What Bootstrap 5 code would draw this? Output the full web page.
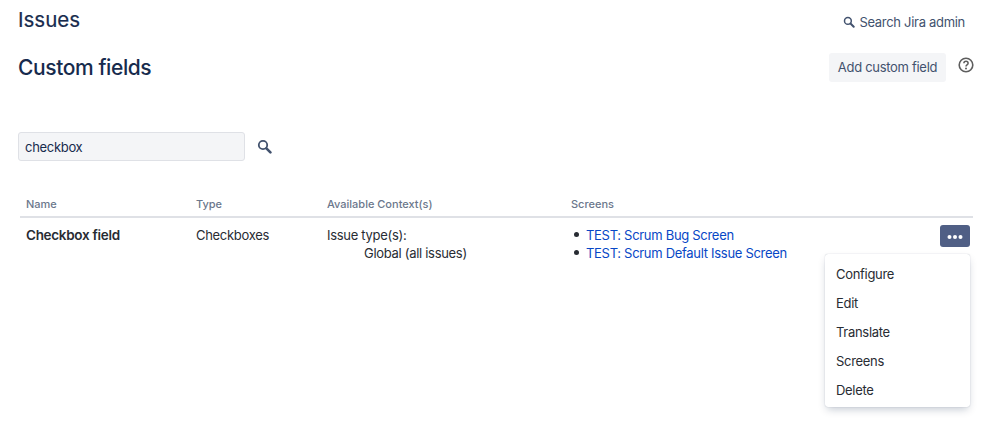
<!doctype html>
<html lang="en">
<head>
<meta charset="utf-8">
<title>Custom fields</title>
<link href="https://cdn.jsdelivr.net/npm/bootstrap@5.3.0/dist/css/bootstrap.min.css" rel="stylesheet">
<style>
html,body{height:100%;overflow:hidden}
body{font-family:Inter,"Liberation Sans",sans-serif;font-size:13px;letter-spacing:-.3px;line-height:19px;color:#172b4d;background:#fff;padding:0 25px 0 18px}
.top-bar{height:40px}
.sec-title{font-size:20.5px;font-weight:400;line-height:24px;margin:0;color:#172b4d;letter-spacing:0;-webkit-text-stroke:.2px #172b4d}
.admin-search{color:#42526e;margin-right:9px;margin-top:4px}
.head-bar{height:79px;margin-top:13px}
.page-title{font-size:21px;font-weight:500;letter-spacing:-.4px;line-height:29px;margin:0;color:#172b4d}
.add-btn{background:#f4f5f7;color:#42526e;border:0;border-radius:3px;height:29px;width:117px;padding:0;font-size:13px;letter-spacing:-.3px;margin-right:12px}
.help-ico{margin-top:4px}
.filter-input{width:227px;height:29px;background:#f4f5f7;border:1px solid #dfe1e6;border-radius:3px;color:#172b4d;font-size:13px;letter-spacing:-.3px;padding:0 6px}
.filter-row{gap:12px}
.field-table{margin:33px 0 0 2px;width:953px;table-layout:fixed;border-collapse:collapse}
.field-table th{font-size:11px;font-weight:500;letter-spacing:0;color:#6b778c;padding:0 6px 2px;line-height:20px;border-bottom:2px solid #dfe1e6}
.field-table td{padding:8px 6px 0;vertical-align:top;line-height:18px;color:#282c33}
.field-table td.name-cell{font-weight:600;font-size:13.5px}
.ctx-list{padding-left:37px}
.scr-list{margin:0;padding-left:15px;list-style:none}
.scr-list li{position:relative}
.scr-list li::before{content:"";position:absolute;left:-12px;top:6px;width:5px;height:5px;border-radius:50%;background:#282c33}
.scr-list a{color:#0747c6;text-decoration:none}
.more-wrap{position:relative;height:40px}
.more-btn{position:absolute;top:-1px;right:-3px;width:30px;height:22px;background:#505f85;border:0;border-radius:3px;padding:0}
.more-menu{position:absolute;top:28px;right:-3px;width:145px;background:#fff;border-radius:3px;box-shadow:0 4px 8px -2px rgba(9,30,66,.25),0 0 1px rgba(9,30,66,.31);padding:5px 0 3px;z-index:5}
.more-menu a{display:block;height:29px;line-height:30px;padding:0 11px;color:#282c33;text-decoration:none;font-size:13px}
</style>
</head>
<body>
<div class="top-bar d-flex justify-content-between align-items-center">
  <h2 class="sec-title">Issues</h2>
  <div class="admin-search d-flex align-items-center gap-1">
    <svg width="12" height="12" viewBox="0 0 12 12" fill="none" stroke="#42526e"><circle cx="4.9" cy="4.9" r="3.4" stroke-width="1.5"/><path d="M7.5 7.5l3.2 3.2" stroke-width="2" stroke-linecap="round"/></svg>
    <span>Search Jira admin</span>
  </div>
</div>
<div class="head-bar d-flex justify-content-between align-items-start">
  <h1 class="page-title">Custom fields</h1>
  <div class="d-flex align-items-start">
    <button class="add-btn" type="button">Add custom field</button>
    <svg class="help-ico" width="16" height="16" viewBox="0 0 16 16" fill="none"><circle cx="8" cy="8" r="6.8" stroke="#5e5e5e" stroke-width="1.6"/><path d="M5.9 6.3c0-1.2 1-2 2.1-2s2.1.8 2.1 1.9c0 1.7-2.1 1.6-2.1 3.2" stroke="#5e5e5e" stroke-width="1.5"/><circle cx="8" cy="11.4" r="1" fill="#5e5e5e"/></svg>
  </div>
</div>
<div class="filter-row d-flex align-items-center">
  <input class="filter-input" type="text" value="checkbox" aria-label="Filter">
  <svg width="15" height="15" viewBox="0 0 15 15" fill="none" stroke="#42526e"><circle cx="6" cy="6" r="4.2" stroke-width="1.8"/><path d="M9.4 9.4l4 4" stroke-width="2.6" stroke-linecap="round"/></svg>
</div>
<table class="field-table">
  <colgroup><col style="width:170px"><col style="width:131px"><col style="width:244px"><col style="width:330px"><col></colgroup>
  <thead><tr><th>Name</th><th>Type</th><th>Available Context(s)</th><th>Screens</th><th></th></tr></thead>
  <tbody><tr>
    <td class="name-cell">Checkbox field</td>
    <td>Checkboxes</td>
    <td>Issue type(s):<div class="ctx-list">Global (all issues)</div></td>
    <td><ul class="scr-list"><li><a href="#">TEST: Scrum Bug Screen</a></li><li><a href="#">TEST: Scrum Default Issue Screen</a></li></ul></td>
    <td><div class="more-wrap">
      <button class="more-btn" type="button" aria-label="More"><svg width="16" height="4" viewBox="0 0 16 4" fill="#fff"><circle cx="2.5" cy="2" r="2"/><circle cx="8" cy="2" r="2"/><circle cx="13.5" cy="2" r="2"/></svg></button>
      <div class="more-menu"><a href="#">Configure</a><a href="#">Edit</a><a href="#">Translate</a><a href="#">Screens</a><a href="#">Delete</a></div>
    </div></td>
  </tr></tbody>
</table>
</body>
</html>
